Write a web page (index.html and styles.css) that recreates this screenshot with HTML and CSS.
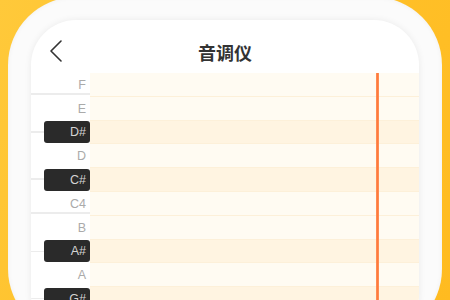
FILE: index.html
```html
<!DOCTYPE html>
<html lang="zh">
<head>
<meta charset="utf-8">
<title>音调仪</title>
<link rel="stylesheet" href="styles.css">
</head>
<body>
<div class="frame">
  <div class="screen">
    <div class="header">
      <svg class="back" width="14" height="22" viewBox="0 0 14 22"><path d="M12 1 L2 11 L12 21" fill="none" stroke="#333" stroke-width="1.6" stroke-linecap="round" stroke-linejoin="round"/></svg>
      <div class="title">音调仪</div>
      <div></div>
    </div>
    <div class="roll">
      <div class="row white line-bottom"><div class="key"><span class="lbl">F</span></div><div class="lane"></div></div>
      <div class="row white"><div class="key"><span class="lbl">E</span></div><div class="lane"></div></div>
      <div class="row black"><div class="key"><span class="bk">D#</span></div><div class="lane"></div></div>
      <div class="row white"><div class="key"><span class="lbl">D</span></div><div class="lane"></div></div>
      <div class="row black"><div class="key"><span class="bk">C#</span></div><div class="lane"></div></div>
      <div class="row white line-bottom"><div class="key"><span class="lbl">C4</span></div><div class="lane"></div></div>
      <div class="row white"><div class="key"><span class="lbl">B</span></div><div class="lane"></div></div>
      <div class="row black"><div class="key"><span class="bk">A#</span></div><div class="lane"></div></div>
      <div class="row white"><div class="key"><span class="lbl">A</span></div><div class="lane"></div></div>
      <div class="row black"><div class="key"><span class="bk">G#</span></div><div class="lane"></div></div>
      <div class="row white"><div class="key"><span class="lbl">G</span></div><div class="lane"></div></div>
      <div class="playhead"></div>
    </div>
  </div>
</div>
</body>
</html>
```
FILE: styles.css
```css
html, body {
  margin: 0;
  padding: 0;
}
body {
  width: 450px;
  height: 300px;
  overflow: hidden;
  background: linear-gradient(120deg, #ffc93a 0%, #ffc12a 50%, #ffbb20 100%);
  font-family: "Liberation Sans", Arial, sans-serif;
}
.frame {
  margin: -3px 0 0 8px;
  width: 434px;
  height: 340px;
  box-sizing: border-box;
  padding: 23px 23px 0;
  border-radius: 68px;
  background: #fbfbfb;
  box-shadow: inset 0 0 5px rgba(0, 0, 0, 0.05);
}
.screen {
  width: 388px;
  height: 320px;
  background: #fff;
  border-radius: 45px;
  box-shadow: 0 0 7px rgba(0, 0, 0, 0.07);
  overflow: hidden;
}
.header {
  height: 53px;
  box-sizing: border-box;
  padding: 8px 0 0 18px;
  display: grid;
  grid-template-columns: 1fr auto 1fr;
  align-items: center;
}
.back {
  display: block;
}
.title {
  font-family: "Noto Sans CJK SC", sans-serif;
  font-size: 18px;
  font-weight: 700;
  color: #333;
  line-height: 24px;
  padding-top: 3px;
  margin-left: -18px;
}
.roll {
  position: relative;
}
.row {
  display: flex;
  height: 23.8px;
}
.key {
  width: 59px;
  flex: none;
  display: flex;
  align-items: center;
  justify-content: flex-end;
  box-sizing: border-box;
}
.row.white .key {
  padding-right: 4px;
}
.row.line-bottom .key {
  background: linear-gradient(to bottom, transparent 20.5px, #ececec 20.5px, #ececec 21.8px, transparent 21.8px);
}
.row.black .key {
  background: linear-gradient(to bottom, transparent 10.5px, #ececec 10.5px, #ececec 11.8px, transparent 11.8px);
}
.lbl {
  font-size: 12.5px;
  color: #aaa;
}
.bk {
  width: 46px;
  height: 22px;
  box-sizing: border-box;
  background: #2a2a2a;
  border-radius: 3px;
  color: #d4d4d4;
  font-size: 12.5px;
  display: flex;
  align-items: center;
  justify-content: flex-end;
  padding-right: 4px;
}
.lane {
  flex: 1;
  box-sizing: border-box;
  border-bottom: 1.5px solid #fdf0d9;
}
.row.white .lane {
  background: #fffbf2;
}
.row.black .lane {
  background: #fff4e1;
}
.playhead {
  position: absolute;
  top: 0;
  bottom: 0;
  left: 345px;
  width: 3px;
  background: linear-gradient(to right, #ff9a66, #ff7a3c 35%, #ff7a3c 65%, #ff9a66);
}
```
